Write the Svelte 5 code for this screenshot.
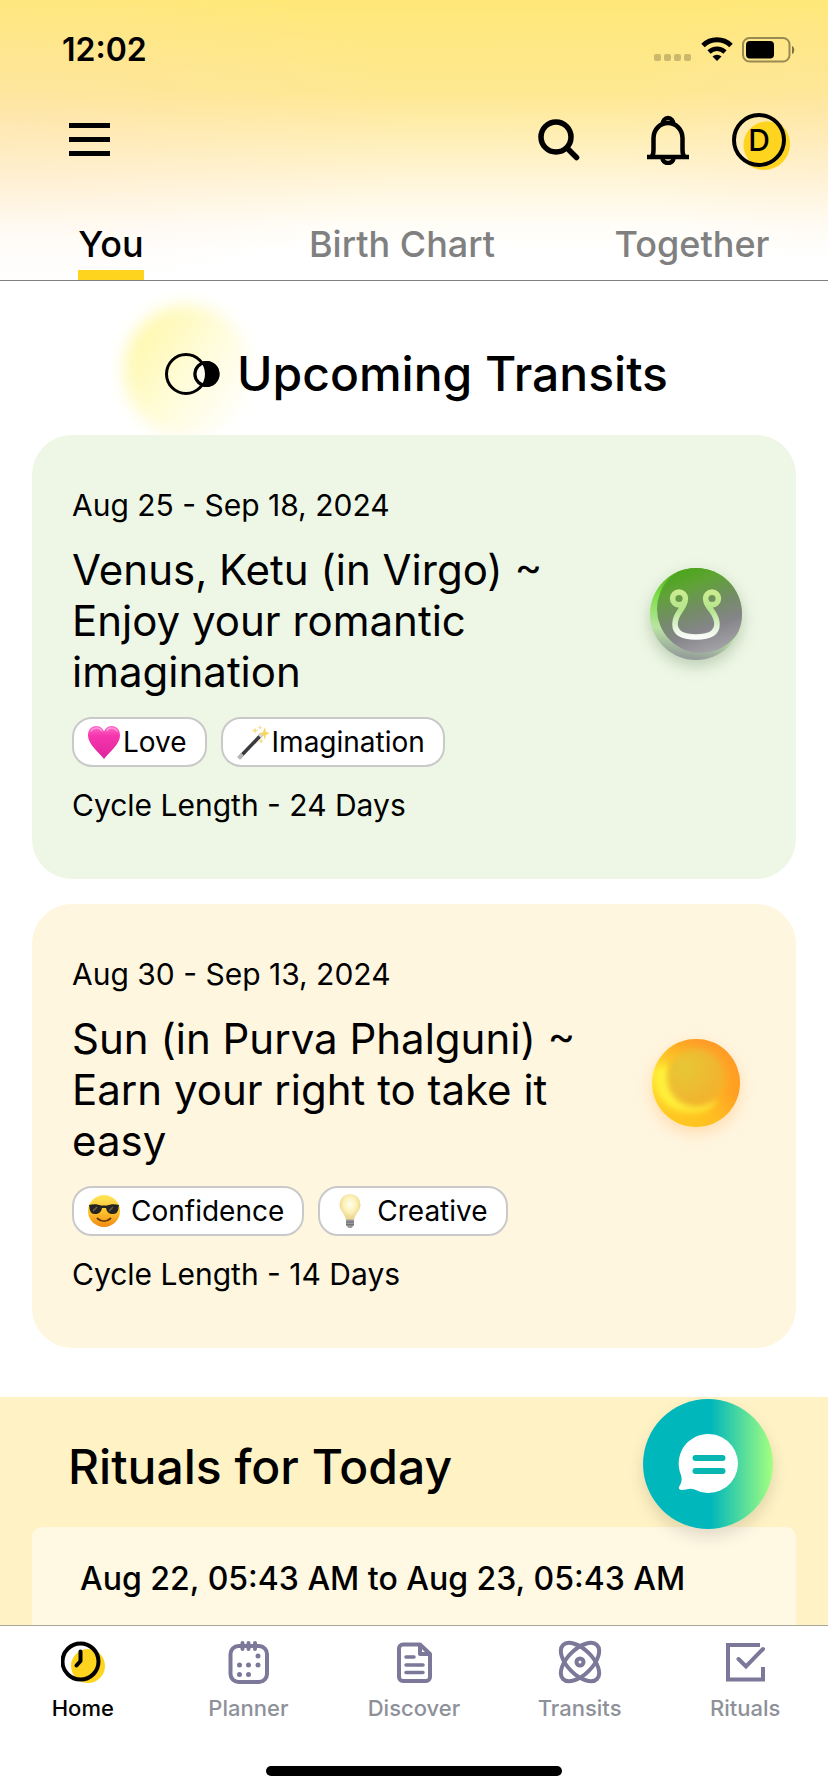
<script lang="ts">
	type Tag = { icon: string; label: string; spaced?: boolean };
	type Transit = {
		dates: string;
		title: string;
		tags: Tag[];
		days: number;
		orb: string;
	};

	const tabs = ['You', 'Birth Chart', 'Together'];
	const navItems = ['Home', 'Planner', 'Discover', 'Transits', 'Rituals'];

	const transits: Transit[] = [
		{
			dates: 'Aug 25 - Sep 18, 2024',
			title: 'Venus, Ketu (in Virgo) ~ Enjoy your romantic imagination',
			tags: [
				{ icon: 'heart', label: 'Love' },
				{ icon: 'wand', label: 'Imagination' }
			],
			days: 24,
			orb: 'ketu'
		},
		{
			dates: 'Aug 30 - Sep 13, 2024',
			title: 'Sun (in Purva Phalguni) ~ Earn your right to take it easy',
			tags: [
				{ icon: 'cool', label: 'Confidence', spaced: true },
				{ icon: 'bulb', label: 'Creative', spaced: true }
			],
			days: 14,
			orb: 'sun'
		}
	];

	let activeTab = $state('You');
	let activeNav = $state('Home');
</script>

{#snippet emoji(name: string)}
	<svg class="emoji" viewBox="0 0 34 36" aria-hidden="true">
		{#if name === 'heart'}
			<defs>
				<linearGradient id="heart-fill" x1="0" y1="0" x2="0" y2="1">
					<stop offset="0" stop-color="#ff6cc9" />
					<stop offset="0.3" stop-color="#f536ae" />
					<stop offset="1" stop-color="#e0249b" />
				</linearGradient>
			</defs>
			<path d="M17 35C13 29 1 21 1 11.500C1 5.500 4.500 2 9 2c4 0 6.800 2 8 5.500C18.200 4 21 2 25 2c4.500 0 8 3.500 8 9.500C33 21 21 29 17 35z" fill="url(#heart-fill)" />
			<path d="M4 7c2-3.500 8-4 10.500-.5M20 6.500c2-3.500 8-3 10 .5" stroke="#ff9bdb" stroke-width="1.500" fill="none" stroke-linecap="round" />
		{:else if name === 'wand'}
			<path d="M3 34L26 10" stroke="#3b3b3f" stroke-width="3.600" />
			<path d="M2.500 34.500l4-4.200" stroke="#b9b9bd" stroke-width="3.800" />
			<path d="M23.500 12.500l2.500-2.600" stroke="#d8d8d8" stroke-width="3.600" />
			<path d="M29 3l1 5 4 1-4 2-1 5-1.500-4.500L23 10l4-2z" fill="#f7d764" />
			<path d="M19 3l.8 2.800 2.700.7-2.700 1L19 10l-.8-2.500-2.700-1 2.700-.7zM25 14l.8 2.300 2 .7-2 .8L25 20l-.8-2.200-2-.8 2-.7zM24 1l.6 1.900 1.700.5-1.700.6L24 6l-.6-2-1.700-.6 1.700-.5z" fill="#f4dd80" />
		{:else if name === 'cool'}
			<defs>
				<linearGradient id="face-fill" x1="0" y1="0" x2="0" y2="1">
					<stop offset="0" stop-color="#ffe65c" />
					<stop offset="0.5" stop-color="#ffc42e" />
					<stop offset="1" stop-color="#f08a12" />
				</linearGradient>
			</defs>
			<circle cx="17" cy="18" r="16" fill="url(#face-fill)" />
			<path d="M2 12c5-1.500 9-.8 12 .6h6c3-1.400 7-2.100 12-.6l-.5 3C31 20 28.500 21 25.500 21c-4 0-5.800-2.500-6.500-6h-4c-.7 3.500-2.500 6-6.500 6C5.500 21 3 20 2.500 15z" fill="#26241f" />
			<path d="M6 18l4-4M22 18l4-4" stroke="#65625a" stroke-width="1.400" />
			<path d="M10.500 25.500c4 3.500 9 3.500 13 0" stroke="#5b3411" stroke-width="1.800" fill="none" stroke-linecap="round" />
		{:else}
			<defs>
				<radialGradient id="bulb-fill" cx="0.5" cy="0.4">
					<stop offset="0" stop-color="#fffef0" />
					<stop offset="0.6" stop-color="#fdf2b9" />
					<stop offset="1" stop-color="#eed994" />
				</radialGradient>
			</defs>
			<path d="M17 1a10.500 10.500 0 0 0-10.500 10.500c0 6.500 5.500 9 6.500 15.500h8c1-6.500 6.500-9 6.500-15.500A10.500 10.500 0 0 0 17 1z" fill="url(#bulb-fill)" />
			<path d="M13 26.500h8v5.500l-2.500 3h-3L13 32z" fill="#9b9b9f" />
			<path d="M13 29h8M13 31.800h8" stroke="#66666a" />
		{/if}
	</svg>
{/snippet}

{#snippet orb(kind: string)}
	<svg class="orb {kind}" viewBox="0 0 92 92" aria-hidden="true">
		{#if kind === 'ketu'}
			<defs>
				<linearGradient id="ketu-rim" x1="0.55" y1="0" x2="0.4" y2="1">
					<stop offset="0" stop-color="#41990f" />
					<stop offset="0.35" stop-color="#7bdc47" />
					<stop offset="0.7" stop-color="#b9e5a3" />
					<stop offset="1" stop-color="#92969a" />
				</linearGradient>
				<linearGradient id="ketu-top" x1="0.35" y1="0.02" x2="0.7" y2="1">
					<stop offset="0" stop-color="#4aa618" />
					<stop offset="0.2" stop-color="#5fa336" />
					<stop offset="0.48" stop-color="#748b68" />
					<stop offset="0.7" stop-color="#858589" />
					<stop offset="1" stop-color="#a6a6ab" />
				</linearGradient>
				<linearGradient id="ketu-line" gradientUnits="userSpaceOnUse" x1="0" y1="22" x2="0" y2="72">
					<stop offset="0" stop-color="#cdec90" />
					<stop offset="0.4" stop-color="#b4e58c" />
					<stop offset="0.75" stop-color="#e3f3da" />
					<stop offset="1" stop-color="#ffffff" />
				</linearGradient>
				<clipPath id="ketu-clip"><circle cx="46" cy="46" r="46" /></clipPath>
			</defs>
			<circle cx="46" cy="46" r="46" fill="url(#ketu-rim)" />
			<circle cx="51" cy="41" r="44" fill="url(#ketu-top)" clip-path="url(#ketu-clip)" />
			<g fill="none" stroke="url(#ketu-line)" stroke-width="5.600">
				<path d="M35 33C34 41 25 45 25 56c0 9 8 13 21 13s21-4 21-13c0-11-9-15-11-23" />
				<circle cx="29" cy="30.500" r="6.400" />
				<circle cx="62" cy="30.500" r="6.400" />
			</g>
		{:else}
			<defs>
				<linearGradient id="sun-base" x1="0" y1="0.6" x2="1" y2="0.35">
					<stop offset="0" stop-color="#fff93b" />
					<stop offset="0.4" stop-color="#ffd21f" />
					<stop offset="0.75" stop-color="#ffaa24" />
					<stop offset="1" stop-color="#ff8d1b" />
				</linearGradient>
				<linearGradient id="sun-top" x1="0.3" y1="1" x2="0.6" y2="0">
					<stop offset="0" stop-color="#ffc51f" />
					<stop offset="0.5" stop-color="#ffb326" stop-opacity="0.2" />
					<stop offset="1" stop-color="#ff9a28" />
				</linearGradient>
				<radialGradient id="sun-core" cx="0.3" cy="0.35" r="0.75">
					<stop offset="0" stop-color="#e6c836" />
					<stop offset="0.8" stop-color="#f1b42e" />
					<stop offset="1" stop-color="#f6b32a" />
				</radialGradient>
				<filter id="sun-soft" x="-0.2" y="-0.2" width="1.400" height="1.400"><feGaussianBlur stdDeviation="3" /></filter>
			</defs>
			<circle cx="46" cy="46" r="44" fill="url(#sun-base)" />
			<circle cx="46" cy="46" r="44" fill="url(#sun-top)" />
			<path d="M6 34C4 62 18 75 45 75c10 0 18-5 22-14C50 70 22 58 16 26z" fill="#fff23a" filter="url(#sun-soft)" />
			<circle cx="46" cy="41" r="29" fill="url(#sun-core)" filter="url(#sun-soft)" />
		{/if}
	</svg>
{/snippet}

{#snippet navIcon(name: string)}
	<svg viewBox="0 0 44 44" fill="none" stroke="currentColor" stroke-width="4" stroke-linecap="round" aria-hidden="true">
		{#if name === 'Home'}
			<circle cx="27" cy="26" r="17" fill="#ffd41f" stroke="none" />
			<circle cx="19.500" cy="21.500" r="18" />
			<path d="M19.500 11.500V21l-4 4.500" stroke-linejoin="round" />
		{:else if name === 'Planner'}
			<rect x="4.500" y="6" width="36.500" height="36" rx="8" />
			<path d="M16.500 3v6M22.500 3v6M29 3v6" />
			<g fill="currentColor" stroke="none">
				<circle cx="32" cy="16" r="2.500" />
				<circle cx="13.500" cy="25" r="2.500" />
				<circle cx="22.500" cy="25" r="2.500" />
				<circle cx="32" cy="25" r="2.500" />
				<circle cx="13.500" cy="34.500" r="2.500" />
				<circle cx="22.500" cy="34.500" r="2.500" />
			</g>
		{:else if name === 'Discover'}
			<path d="M28 4.500H11a4 4 0 0 0-4 4V37a4 4 0 0 0 4 4h23a4 4 0 0 0 4-4V14zV14h10" stroke-linejoin="round" />
			<path d="M14 17h8M14 25h17M14 32.500h17" stroke-width="3.500" />
		{:else if name === 'Transits'}
			<ellipse cx="22" cy="22" rx="24" ry="12.500" transform="rotate(45 22 22)" />
			<ellipse cx="22" cy="22" rx="24" ry="12.500" transform="rotate(-45 22 22)" />
			<circle cx="22" cy="22" r="3.500" />
		{:else}
			<path d="M35 5H5v34.500h35V29" stroke-linecap="square" />
			<path d="M15.500 19l7.500 7.500L40 9" />
		{/if}
	</svg>
{/snippet}

<div class="app">
	<header>
		<div class="status">
			<span class="time">12:02</span>
			<div class="signals">
				<svg width="38" height="26" viewBox="0 0 38 26" aria-hidden="true">
					<g fill="#000" opacity="0.2">
						<rect x="0" y="17" width="7" height="7" rx="2" />
						<rect x="10" y="17" width="7" height="7" rx="2" />
						<rect x="20" y="17" width="7" height="7" rx="2" />
						<rect x="30" y="17" width="7" height="7" rx="2" />
					</g>
				</svg>
				<svg width="32" height="26" viewBox="0 0 32 26" fill="none" stroke="#000" stroke-width="5" aria-hidden="true">
					<path d="M2 8.500a20 20 0 0 1 28 0" />
					<path d="M8 15a11.500 11.500 0 0 1 16 0" stroke-width="4.600" />
					<path d="M11.500 19.500a6.500 6.500 0 0 1 9 0L16 24z" fill="#000" stroke="none" />
				</svg>
				<svg width="54" height="26" viewBox="0 0 54 26" aria-hidden="true">
					<rect x="1" y="1" width="46.500" height="23.500" rx="6.500" fill="none" stroke="#000" stroke-opacity="0.4" stroke-width="2" />
					<path d="M50 9c3 1 3 7 0 8z" opacity="0.5" />
					<rect x="4" y="4" width="28" height="17.500" rx="4" />
				</svg>
			</div>
		</div>

		<div class="toolbar">
			<button class="menu" aria-label="Menu">
				<svg width="42" height="34" viewBox="0 0 42 34" aria-hidden="true">
					<path d="M0 2.500h41M0 16.500h41M0 30.500h41" stroke="#000" stroke-width="5" />
				</svg>
			</button>
			<button aria-label="Search">
				<svg width="42" height="42" viewBox="0 0 42 42" fill="none" stroke="#000" stroke-width="5.500" stroke-linecap="round" aria-hidden="true">
					<circle cx="18" cy="18" r="15" />
					<path d="M29.500 29.500l9 9" />
				</svg>
			</button>
			<button class="bell" aria-label="Notifications">
				<svg width="44" height="50" viewBox="0 0 44 50" fill="none" stroke="#000" stroke-width="4.500" aria-hidden="true">
					<path d="M1 42h42M5.500 42c2-2 2-4 2-7V23a14.500 15 0 0 1 29 0v12c0 3 0 5 2 7" />
					<path d="M16.500 9.500a5.500 6.500 0 0 1 11 0M16.500 43a5.500 5 0 0 0 11 0" />
				</svg>
			</button>
			<button class="avatar" aria-label="Profile">D</button>
		</div>

		<nav class="tabs">
			{#each tabs as tab}
				<button class:active={activeTab === tab} onclick={() => (activeTab = tab)}><span>{tab}</span></button>
			{/each}
		</nav>
	</header>

	<main>
		<section class="upcoming">
			<h2>
				<svg width="56" height="46" viewBox="0 0 56 46" aria-hidden="true">
					<defs>
						<clipPath id="moon"><circle cx="42.500" cy="23" r="11.500" /></clipPath>
					</defs>
					<circle cx="22" cy="23" r="19.500" fill="none" stroke="#000" stroke-width="3" />
					<circle cx="42.500" cy="23" r="13" />
					<circle cx="22" cy="23" r="19" fill="#fffef2" clip-path="url(#moon)" />
					<circle cx="42.500" cy="23" r="11.500" fill="none" stroke="#000" stroke-width="3" />
				</svg>
				Upcoming Transits
			</h2>

			<div class="cards">
				{#each transits as transit}
					<article class="card {transit.orb}">
						<div class="details">
							<p>{transit.dates}</p>
							<h3>{transit.title}</h3>
							<ul class="tags">
								{#each transit.tags as tag}
									<li class:spaced={tag.spaced}>{@render emoji(tag.icon)}{tag.label}</li>
								{/each}
							</ul>
							<p>Cycle Length - {transit.days} Days</p>
						</div>
						{@render orb(transit.orb)}
					</article>
				{/each}
			</div>
		</section>

		<section class="rituals">
			<h2>Rituals for Today</h2>
			<div class="ritual-box">
				<p>Aug 22, 05:43 AM to Aug 23, 05:43 AM</p>
			</div>
		</section>
	</main>

	<button class="chat" aria-label="Chat">
		<svg width="62" height="62" viewBox="0 0 62 62" aria-hidden="true">
			<path d="M32 1a29.500 29.500 0 1 1-14.500 55.500C13 54.500 9 57 4.500 57c-3 0-3-2-2-4C5 49 5 46 4 42A29.500 29.500 0 0 1 32 1z" fill="#fff" />
			<path d="M18.500 25h27M18.500 38h27" stroke="#08b6b2" stroke-width="6" stroke-linecap="round" />
		</svg>
	</button>

	<footer>
		<nav class="bottom-nav">
			{#each navItems as item}
				<button class:active={activeNav === item} onclick={() => (activeNav = item)}>
					{@render navIcon(item)}
					<span>{item}</span>
				</button>
			{/each}
		</nav>
		<div class="home-indicator"></div>
	</footer>
</div>

<style>
	:global(body) {
		margin: 0;
		background: #fff;
	}

	.app {
		position: relative;
		display: flex;
		flex-direction: column;
		height: 100vh;
		overflow: hidden;
		color: #000;
		font-family: Inter, 'Liberation Sans', sans-serif;
	}

	button {
		padding: 0;
		border: 0;
		background: none;
		color: inherit;
		font: inherit;
		cursor: pointer;
	}

	svg {
		display: block;
		flex: none;
	}

	h2,
	h3,
	p,
	ul {
		margin: 0;
		padding: 0;
		font-weight: 400;
	}

	header {
		flex: none;
		border-bottom: 1px solid #808080;
		background:
			radial-gradient(ellipse 50% 60% at 0 45%, rgba(255, 220, 195, 0.3), transparent),
			radial-gradient(ellipse 25% 50% at 100% 45%, rgba(255, 220, 195, 0.2), transparent),
			linear-gradient(#ffe878, #fee891 33%, #ffefb8 50%, #fff6dc 66%, #fffdf6 80%, #fff 90%);
	}

	.status {
		display: flex;
		justify-content: space-between;
		align-items: center;
		padding: 30px 32px 0 62px;
	}

	.time {
		font-size: 32px;
		font-weight: 600;
		line-height: 40px;
	}

	.signals {
		display: flex;
		gap: 9px;
	}

	.toolbar {
		display: flex;
		align-items: center;
		height: 96px;
		padding: 22px 42px 0 69px;
	}

	.menu {
		margin-right: auto;
	}

	.bell {
		margin: 0 42px 0 66px;
	}

	.avatar {
		box-sizing: border-box;
		width: 54px;
		height: 54px;
		border: 4px solid #000;
		border-radius: 50%;
		background: radial-gradient(circle at 31px 28px, #ffd41f 23px, transparent 24px);
		background-origin: padding-box;
		box-shadow: 5px 4px 0 -1px #ffd41f;
		font-size: 30px;
		font-weight: 500;
		line-height: 40px;
	}

	.tabs {
		display: grid;
		grid-template-columns: 222fr 360fr 220fr;
		padding: 34px 26px 0 0;
		color: #808080;
		font-size: 36px;
		font-weight: 500;
		line-height: 44px;
	}

	.tabs span {
		display: inline-block;
		padding-bottom: 4px;
		border-bottom: 10px solid transparent;
	}

	.tabs button {
		display: flex;
		justify-content: center;
		white-space: nowrap;
	}

	.tabs .active {
		color: #000;
	}

	.tabs .active span {
		border-color: #ffd41f;
	}

	main {
		flex: 1;
		min-height: 0;
		overflow-y: auto;
		scrollbar-width: none;
	}

	h2 {
		font-size: 48px;
		font-weight: 500;
		line-height: 58px;
	}

	.upcoming {
		padding: 64px 32px 49px;
	}

	.upcoming h2 {
		position: relative;
		display: flex;
		justify-content: center;
		align-items: center;
		gap: 17px;
		padding-left: 4px;
		margin-bottom: 32px;
		isolation: isolate;
	}

	/* soft halo behind the section icon */
	.upcoming h2::before {
		content: '';
		position: absolute;
		z-index: -1;
		top: -40px;
		left: 92px;
		width: 126px;
		height: 132px;
		border-radius: 50%;
		background: linear-gradient(125deg, #fff8ac 15%, #fffcd8 50%, rgba(255, 254, 240, 0.5) 85%);
		filter: blur(8px);
	}

	.cards {
		position: relative;
		display: flex;
		flex-direction: column;
		gap: 25px;
	}

	.card {
		display: flex;
		align-items: flex-start;
		gap: 40px;
		padding: 52px 54px 55px 40px;
		border-radius: 40px;
		font-size: 30px;
		line-height: 37px;
	}

	.card.ketu {
		background: #eef7e6;
	}

	.card.sun {
		background: #fff6e0;
	}

	.details {
		flex: 1;
		display: flex;
		flex-direction: column;
		gap: 20px;
	}

	h3 {
		font-size: 42px;
		line-height: 51px;
	}

	.tags {
		display: flex;
		gap: 14px;
		list-style: none;
	}

	.tags li {
		display: flex;
		align-items: center;
		gap: 2px;
		box-sizing: border-box;
		height: 50px;
		padding: 0 18px 0 13px;
		border: 2px solid #c9c9c9;
		border-radius: 20px;
		background: #fff;
		font-size: 28px;
	}

	.tags .spaced {
		gap: 10px;
	}

	.emoji {
		width: 34px;
		height: 36px;
	}

	.orb {
		width: 92px;
		height: 92px;
		margin-top: 81px;
		overflow: visible;
	}

	.orb.ketu {
		filter: drop-shadow(0 6px 8px rgba(70, 110, 60, 0.3));
	}

	.orb.sun {
		filter: drop-shadow(0 6px 8px rgba(255, 160, 60, 0.3));
	}

	.rituals {
		padding: 41px 32px 0;
		background: #fff2c4;
	}

	.rituals h2 {
		padding-left: 36px;
		margin-bottom: 31px;
	}

	.ritual-box {
		padding: 32px 48px 80px;
		border-radius: 10px;
		background: #fff9e4;
		font-size: 32px;
		line-height: 40px;
	}

	.ritual-box p {
		font-weight: 500;
	}

	.chat {
		position: absolute;
		right: 55px;
		bottom: 263px;
		display: flex;
		justify-content: center;
		align-items: center;
		width: 130px;
		height: 130px;
		border-radius: 50%;
		background: linear-gradient(90deg, #00b7bb 52%, #a4ff80);
		box-shadow: 0 8px 16px rgba(0, 0, 0, 0.12);
	}

	footer {
		flex: none;
		padding-bottom: 16px;
		border-top: 1px solid #a8a599;
		background: #fff;
	}

	.bottom-nav {
		display: grid;
		grid-template-columns: repeat(5, 1fr);
		padding: 14px 0 44px;
	}

	.bottom-nav button {
		display: flex;
		flex-direction: column;
		align-items: center;
		gap: 10px;
		color: #7b7899;
		font-size: 22px;
		font-weight: 500;
		line-height: 28px;
	}

	.bottom-nav svg {
		width: 44px;
		height: 44px;
	}

	.bottom-nav span {
		color: #8e9199;
	}

	.bottom-nav .active,
	.bottom-nav .active span {
		color: #000;
	}

	.home-indicator {
		width: 296px;
		height: 10px;
		margin: 0 auto;
		border-radius: 5px;
		background: #000;
	}
</style>
